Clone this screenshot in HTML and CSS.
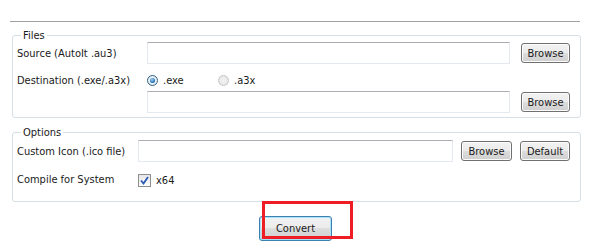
FILE: index.html
```html
<!DOCTYPE html>
<html lang="en">
<head>
    <meta charset="UTF-8">
    <title>Aut2Exe</title>
    <link rel="stylesheet" href="styles.css">
</head>
<body>
    <div class="topline"></div>

    <fieldset class="group files">
        <legend>Files</legend>
        <label class="lbl">Source (AutoIt .au3)</label>
        <input class="field" type="text">
        <button class="btn">Browse</button>

        <label class="lbl row2">Destination (.exe/.a3x)</label>
        <div class="radios row2">
            <span class="opt"><span class="radio on"></span>.exe</span>
            <span class="opt"><span class="radio"></span>.a3x</span>
        </div>

        <input class="field dest" type="text">
        <button class="btn">Browse</button>
    </fieldset>

    <fieldset class="group options">
        <legend>Options</legend>
        <label class="lbl">Custom Icon (.ico file)</label>
        <input class="field" type="text">
        <button class="btn">Browse</button>
        <button class="btn">Default</button>

        <label class="lbl">Compile for System</label>
        <span class="opt check-opt">
            <span class="check">
                <svg width="9" height="9" viewBox="0 0 9 9"><path d="M1 4.5 L3.5 7.5 L8 1" fill="none" stroke="#2a5ab5" stroke-width="1.8"/></svg>
            </span>x64
        </span>
    </fieldset>

    <div class="actions">
        <button class="btn convert">Convert</button>
        <div class="mark"></div>
    </div>
</body>
</html>
```

FILE: styles.css
```css
body {
    margin: 0;
    background: #fff;
    font-family: "DejaVu Sans Condensed", "Liberation Sans", Arial, sans-serif;
    font-size: 11px;
    color: #1a1a1a;
}
.topline {
    margin: 21px 9px 0 10px;
    border-top: 1px solid #a0a0a0;
}
.group {
    margin: 0 8px 0 12px;
    border: 1px solid #d5dfe5;
    border-radius: 3px;
    display: grid;
    align-items: center;
    box-shadow: inset 1px 1px 0 #fff;
}
.group legend {
    padding: 0 2px;
    margin-left: 4px;
    line-height: 13px;
    font-size: 11px;
}
.files {
    margin-top: 7px;
    padding: 0 10px 4px 4px;
    grid-template-columns: 119px 1fr 49px;
    grid-template-rows: 22px 27px 22px;
    column-gap: 11px;
}
.files .row2 {
    padding-top: 5px;
}
.files .dest {
    grid-column: 2;
}
.options {
    margin-top: 8px;
    padding: 1px 10px 4px 4px;
    grid-template-columns: 113px 1fr 51px 50px;
    grid-template-rows: 22px 35px;
    column-gap: 8px;
}
.options .check-opt {
    grid-column: 2 / 5;
    padding-top: 1px;
}
.lbl {
    white-space: nowrap;
}
.field {
    height: 22px;
    box-sizing: border-box;
    border: 1px solid #e3e9ef;
    border-top-color: #abadb3;
    background: #fff;
    margin: 0;
    padding: 0 3px;
}
.btn {
    height: 20px;
    padding: 0;
    border: 1px solid #707070;
    border-radius: 3px;
    background: linear-gradient(#f2f2f2 0%, #ebebeb 49%, #dddddd 50%, #cfcfcf 100%);
    font-family: "DejaVu Sans Condensed", "Liberation Sans", Arial, sans-serif;
    font-size: 11px;
    color: #1a1a1a;
    box-shadow: inset 0 0 0 1px #fcfcfc;
}
.radios {
    display: flex;
}
.opt {
    display: flex;
    align-items: center;
    gap: 5px;
}
.radios .opt {
    width: 71px;
}
.radio {
    width: 11px;
    height: 11px;
    box-sizing: border-box;
    border-radius: 50%;
    border: 1px solid #c6c6c6;
    background: radial-gradient(circle, #f4f4f4 0%, #e2e2e2 100%);
    position: relative;
}
.radio.on {
    border-color: #2c628b;
    background: #e8eef4;
}
.radio.on::after {
    content: "";
    position: absolute;
    left: 2px;
    top: 2px;
    width: 5px;
    height: 5px;
    border-radius: 50%;
    background: radial-gradient(circle at 40% 35%, #9fd4f7 0%, #2a77b9 60%, #12467a 100%);
}
.check {
    width: 11px;
    height: 11px;
    border: 1px solid #8e8f8f;
    background: linear-gradient(#e6e6e6, #fdfdfd);
    display: flex;
    align-items: center;
    justify-content: center;
}
.actions {
    position: relative;
    display: flex;
    justify-content: center;
    padding-top: 14px;
}
.convert {
    width: 73px;
    height: 25px;
    margin-left: 2px;
    border-color: #3c7fb1;
    box-shadow: inset 0 0 0 1px #a7e2f8;
}
.mark {
    position: absolute;
    left: 262px;
    top: -1px;
    width: 85px;
    height: 32px;
    border: 3px solid #ee1c24;
}
```
